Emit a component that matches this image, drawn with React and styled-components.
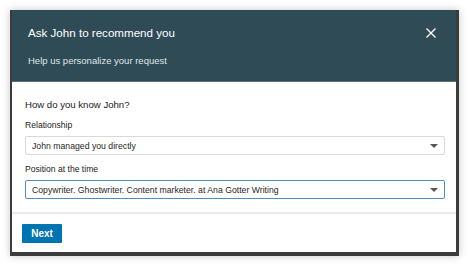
import React from 'react'
import styled, { createGlobalStyle } from 'styled-components'

const Global = createGlobalStyle`
  html, body { margin: 0; padding: 0; background: #ffffff; }
  body { font-family: 'Liberation Sans', Arial, sans-serif; }
`;

const Page = styled.div`width: 470px; height: 267px; padding: 10px 0 0 10px; box-sizing: border-box;`;

const Frame = styled.div`width: 449px; background: #3c3c3c;
padding: 0 3px 4px 2px; box-sizing: border-box;
box-shadow: 0 0 8px rgba(0, 0, 0, 0.22);`;

const Modal = styled.div`background: #ffffff; display: flex; flex-direction: column;`;

const Header = styled.div`background: #2f4b56; height: 72px; box-sizing: border-box;
padding: 15px 16px 0 16px; position: relative; color: #ffffff;
border-bottom: 1px solid #5b7079;`;

const Title = styled.h2`margin: 0; font-size: 11.6px; font-weight: 400; line-height: 16px;`;
const Subtitle = styled.p`margin: 13px 0 0; font-size: 9.5px; line-height: 13px; color: #dfe6e9;`;

const Close = styled.button`position: absolute; top: 17px; right: 18px; width: 14px; height: 14px;
padding: 0; border: none; background: none; cursor: pointer;`;

const Body = styled.div`padding: 16px 11px 13px 13px; border-bottom: 2px solid #e8eaec;`;
const Question = styled.h3`margin: 0 0 7px; font-size: 9.6px; font-weight: 400; color: #1a1a1a; line-height: 14px;`;
const Label = styled.label`display: block; font-size: 8.6px; color: #222; line-height: 12px; margin-bottom: 5px;`;

const Select = styled.div`display: flex; align-items: center; justify-content: space-between;
height: 19px; box-sizing: border-box; padding: 0 6px 0 6px; font-size: 8.7px; color: #1f1f1f;
border: 1px solid ${p => (p.focused ? '#4f8fc0' : '#d9d9d9')}; border-radius: 2px;
margin-bottom: ${p => p.gap || 0}px;`;

const Caret = styled.span`width: 0; height: 0; border-left: 4px solid transparent;
border-right: 4px solid transparent; border-top: 4px solid #555;`;

const Footer = styled.div`padding: 9px 10px 9px 10px;`;
const NextBtn = styled.button`background: #0073b1; color: #fff; border: none; border-radius: 1px;
font-family: inherit; font-weight: 700; font-size: 10px; height: 19px; width: 40px; padding: 0;`;

export default function App() {
  return (
    <Page>
      <Global />
      <Frame>
        <Modal>
          <Header>
            <Title>Ask John to recommend you</Title>
            <Subtitle>Help us personalize your request</Subtitle>
            <Close aria-label="Close">
              <svg width="12" height="12" viewBox="0 0 12 12">
                <path d="M1.5 1.5 L10.5 10.5 M10.5 1.5 L1.5 10.5" stroke="#fff" strokeWidth="1.3" />
              </svg>
            </Close>
          </Header>
          <Body>
            <Question>How do you know John?</Question>
            <Label>Relationship</Label>
            <Select gap={8}>
              <span>John managed you directly</span>
              <Caret />
            </Select>
            <Label>Position at the time</Label>
            <Select focused>
              <span>Copywriter. Ghostwriter. Content marketer. at Ana Gotter Writing</span>
              <Caret />
            </Select>
          </Body>
          <Footer>
            <NextBtn>Next</NextBtn>
          </Footer>
        </Modal>
      </Frame>
    </Page>
  )
}
